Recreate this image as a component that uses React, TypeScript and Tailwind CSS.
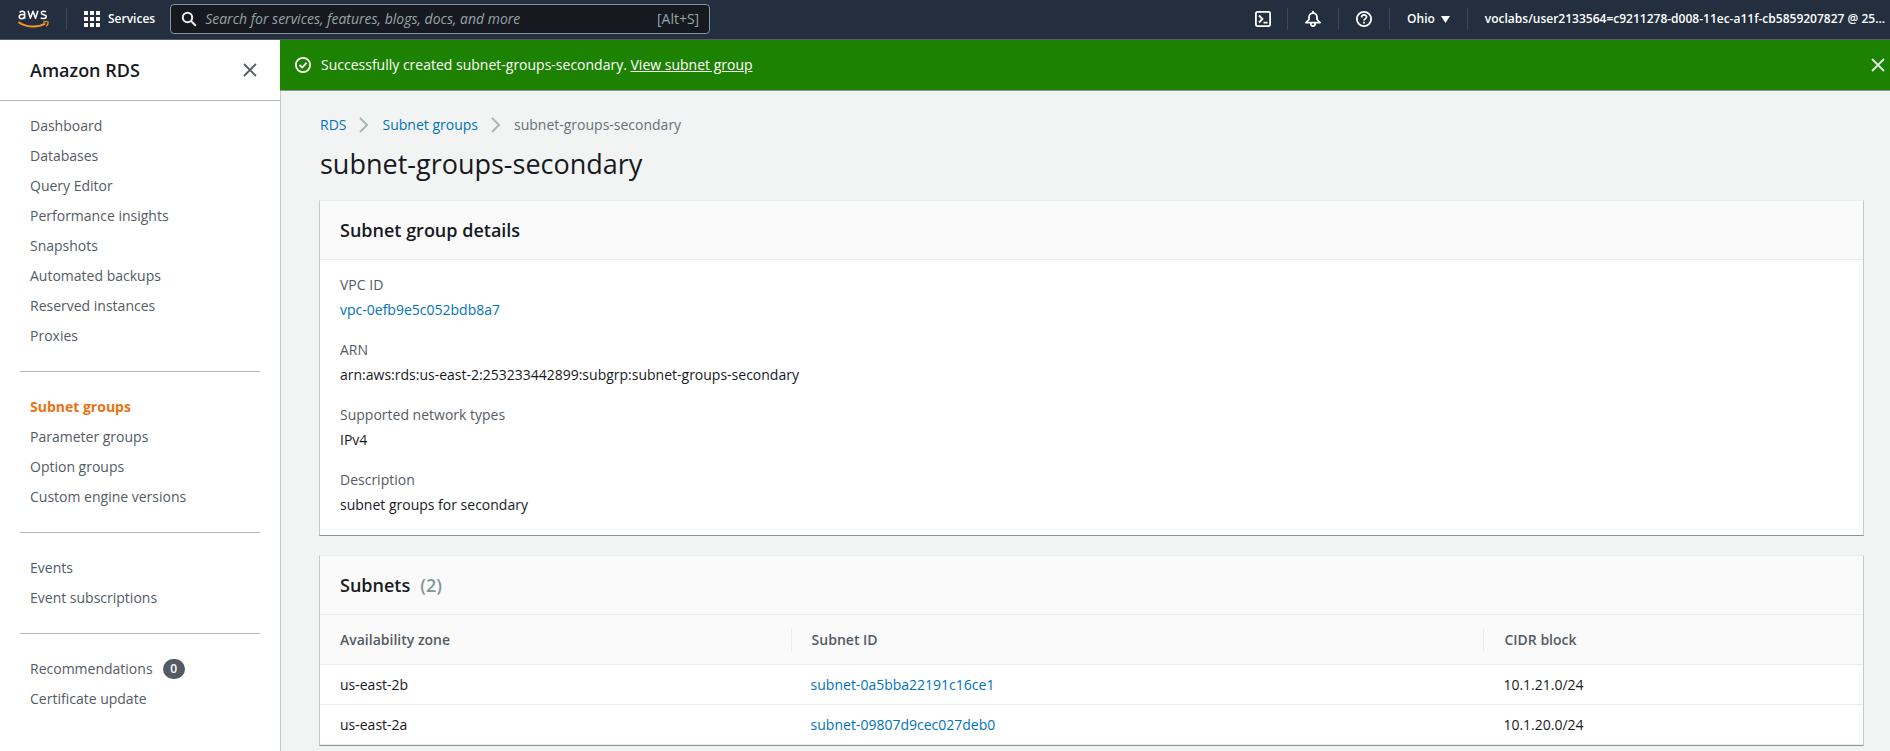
import React from "react";

type NavItem = { label: string; active?: boolean; badge?: number };

const navGroups: NavItem[][] = [
  [
    { label: "Dashboard" },
    { label: "Databases" },
    { label: "Query Editor" },
    { label: "Performance insights" },
    { label: "Snapshots" },
    { label: "Automated backups" },
    { label: "Reserved instances" },
    { label: "Proxies" },
  ],
  [
    { label: "Subnet groups", active: true },
    { label: "Parameter groups" },
    { label: "Option groups" },
    { label: "Custom engine versions" },
  ],
  [{ label: "Events" }, { label: "Event subscriptions" }],
  [{ label: "Recommendations", badge: 0 }, { label: "Certificate update" }],
];

const details = [
  { label: "VPC ID", value: "vpc-0efb9e5c052bdb8a7", link: true },
  { label: "ARN", value: "arn:aws:rds:us-east-2:253233442899:subgrp:subnet-groups-secondary" },
  { label: "Supported network types", value: "IPv4" },
  { label: "Description", value: "subnet groups for secondary" },
];

const subnets = [
  { zone: "us-east-2b", id: "subnet-0a5bba22191c16ce1", cidr: "10.1.21.0/24" },
  { zone: "us-east-2a", id: "subnet-09807d9cec027deb0", cidr: "10.1.20.0/24" },
];

function AwsLogo() {
  return (
    <svg viewBox="0 0 32 20" className="h-5 w-8" aria-hidden="true" fill="none">
      <g stroke="#fff" strokeWidth="1.500" strokeLinejoin="round">
        <path d="M2.600 3.400C3.300 2.600 4.200 2.200 5.300 2.200C7 2.200 7.700 3.100 7.700 4.700V9.800M7.700 5.900C6.900 5.500 2.200 4.900 2.200 7.800C2.200 10.300 6.300 10.200 7.600 7.800" />
        <path d="M11 1.700L13.400 9.300L16 2.200L18.500 9.300L20.900 1.700" />
        <path d="M29 2.900C27.700 1.900 24.300 1.700 24.300 4C24.300 6.300 29.300 5 29.300 7.500C29.300 10 25.100 9.900 23.700 8.700" />
      </g>
      <path d="M1.300 13C9 18.500 20.500 19 28.300 14.500" stroke="#f7981f" strokeWidth="1.900" />
      <path d="M26.300 13C28.600 12.500 30.800 12.500 31 13C31.200 13.700 30.600 15.900 29.300 17.400" stroke="#f7981f" strokeWidth="1.300" />
    </svg>
  );
}

function CloseIcon() {
  return (
    <svg viewBox="0 0 16 16" className="size-4" fill="none" stroke="currentColor" strokeWidth="1.800" aria-hidden="true">
      <path d="M2 2L14 14M14 2L2 14" />
    </svg>
  );
}

function Divider() {
  return <span className="h-[22px] w-px shrink-0 bg-[#414750]" />;
}

function TopBar() {
  return (
    <header className="flex h-10 items-center border-b border-[#545b64] bg-[#232f3e] pb-px text-xs font-semibold text-white">
      <a href="#home" aria-label="AWS home" className="flex w-[66px] shrink-0 items-center pl-[17px]">
        <AwsLogo />
      </a>
      <Divider />
      <button className="flex shrink-0 items-center gap-2 pr-[15px] pl-[17px]">
        <svg viewBox="0 0 16 16" className="size-4" fill="#fff" aria-hidden="true">
          {[0, 6, 12].map((y) => [0, 6, 12].map((x) => <rect key={`${x}-${y}`} x={x} y={y} width="4" height="4" />))}
        </svg>
        Services
      </button>
      <div className="flex h-[30px] w-[540px] shrink items-center gap-2 rounded-sm border border-[#879596] bg-[#16191f] px-[10px]">
        <svg viewBox="0 0 16 16" className="size-4 shrink-0" fill="none" stroke="#eaeded" strokeWidth="2" aria-hidden="true">
          <circle cx="6.500" cy="6.500" r="4.700" />
          <path d="M10 10L14.800 14.800" />
        </svg>
        <input
          type="search"
          aria-label="Search"
          placeholder="Search for services, features, blogs, docs, and more"
          className="min-w-0 flex-1 bg-transparent text-sm font-normal text-white italic outline-none placeholder:text-[#95a5a6]"
        />
        <span className="text-sm font-normal text-[#95a5a6]">[Alt+S]</span>
      </div>
      <div className="ml-auto flex shrink-0 items-center">
        <button aria-label="CloudShell" className="px-4">
          <svg viewBox="0 0 16 16" className="size-4" fill="none" stroke="#fff" strokeWidth="1.800" aria-hidden="true">
            <rect x="0.900" y="0.900" width="14.200" height="14.200" rx="1.500" />
            <path d="M4 4.500L7.500 8L4 11.500M8.500 11.700H12.500" />
          </svg>
        </button>
        <Divider />
        <button aria-label="Notifications" className="px-[17px]">
          <svg viewBox="0 0 16 16" className="size-4" fill="none" stroke="#fff" strokeWidth="1.800" strokeLinejoin="round" aria-hidden="true">
            <path d="M8 0V2M1 11.700L4 8.500V6.200A4 4 0 0 1 12 6.200V8.500L15 11.700ZM5.700 12C5.700 16.200 10.300 16.200 10.300 12" />
          </svg>
        </button>
        <Divider />
        <button aria-label="Support" className="px-[17px]">
          <svg viewBox="0 0 16 16" className="size-4" fill="none" stroke="#fff" strokeWidth="1.800" aria-hidden="true">
            <circle cx="8" cy="8" r="7.100" />
            <path d="M5.600 6.500C5.600 3 10.500 3.200 10.500 6C10.500 7.800 8 7.600 8 9.600M8 10.700V12.500" />
          </svg>
        </button>
        <Divider />
        <button className="flex items-center gap-[6px] px-[17px]">
          Ohio
          <svg viewBox="0 0 9 7" className="h-[7px] w-[9px]" fill="#fff" aria-hidden="true">
            <path d="M0 0H9L4.500 7Z" />
          </svg>
        </button>
        <Divider />
        <button className="pr-[5px] pl-[17px]">voclabs/user2133564=c9211278-d008-11ec-a11f-cb5859207827 @ 25...</button>
      </div>
    </header>
  );
}

function Sidebar() {
  return (
    <aside className="w-[280px] shrink-0 bg-white">
      <div className="flex h-[61px] items-center justify-between border-b border-[#b7b7b7] pr-[22px] pb-px pl-[30px]">
        <h2 className="text-lg font-semibold text-[#16191f]">Amazon RDS</h2>
        <button aria-label="Close navigation" className="text-[#545b64]">
          <CloseIcon />
        </button>
      </div>
      <nav aria-label="Amazon RDS" className="px-5 pt-[10px]">
        {navGroups.map((group, i) => (
          <ul key={i} className={i > 0 ? "mt-5 border-t border-[#b7b7b7] pt-5" : ""}>
            {group.map((item) => (
              <li key={item.label} className="flex min-h-[30px] items-center gap-[10px] pl-[10px]">
                <a href="#nav" className={item.active ? "font-bold text-[#ec7211]" : "text-[#545b64]"}>
                  {item.label}
                </a>
                {item.badge !== undefined && (
                  <span className="flex h-5 w-[22px] items-center justify-center rounded-full bg-[#545b64] text-xs font-semibold text-white">
                    {item.badge}
                  </span>
                )}
              </li>
            ))}
          </ul>
        ))}
      </nav>
    </aside>
  );
}

function Card({ title, count, children }: { title: string; count?: number; children: React.ReactNode }) {
  return (
    <section className="border border-t-[#eaeded] border-r-[#c6cacb] border-b-[#879596] border-l-[#c6cacb] bg-white">
      <h2 className="flex h-[59px] items-center gap-[10px] border-b border-[#eaeded] bg-[#fafafa] px-5 pb-px text-lg font-semibold text-[#16191f]">
        {title}
        {count !== undefined && <span className="text-[#879596]">({count})</span>}
      </h2>
      {children}
    </section>
  );
}

function Chevron() {
  return (
    <svg viewBox="0 0 10 16" className="h-4 w-[10px]" fill="none" stroke="#aab7b8" strokeWidth="2" aria-hidden="true">
      <path d="M1 1L8 8L1 15" />
    </svg>
  );
}

export default function App() {
  return (
    <div className="flex min-h-screen flex-col bg-[#f2f3f3] font-['Open_Sans','Noto_Sans',sans-serif] text-sm leading-5 text-[#16191f]">
      <TopBar />
      <div className="flex flex-1">
        <Sidebar />
        <div className="flex min-w-0 flex-1 flex-col">
          <div role="status" className="flex h-[51px] items-center border-b border-[#879596] bg-[#1d8102] pr-1 pl-[15px] text-white">
            <svg viewBox="0 0 16 16" className="mr-[10px] size-4" fill="none" stroke="#fff" strokeWidth="1.800" aria-hidden="true">
              <circle cx="8" cy="8" r="7.100" />
              <path d="M4.500 8L7.200 10.500L11.500 5.800" />
            </svg>
            <p className="flex-1 font-medium">
              Successfully created subnet-groups-secondary.{" "}
              <a href="#subnet-group" className="underline">
                View subnet group
              </a>
            </p>
            <button aria-label="Dismiss" className="text-[#e0eadc]">
              <CloseIcon />
            </button>
          </div>
          <main className="flex-1 border-l border-[#c6cacb] pt-6 pr-[26px] pb-[6px] pl-[38px]">
            <nav aria-label="Breadcrumb" className="flex items-center gap-[13px] pl-px text-[#0073bb]">
              <a href="#rds">RDS</a>
              <Chevron />
              <a href="#subnet-groups">Subnet groups</a>
              <Chevron />
              <span className="text-[#687078]">subnet-groups-secondary</span>
            </nav>
            <h1 className="mt-[11px] mb-[18px] pl-px text-[27px] leading-9">subnet-groups-secondary</h1>
            <div className="flex flex-col gap-[19px]">
              <Card title="Subnet group details">
                <dl className="flex flex-col gap-5 px-5 pt-[15px] pb-5">
                  {details.map((d) => (
                    <div key={d.label}>
                      <dt className="mb-[5px] text-[#545b64]">{d.label}</dt>
                      <dd>
                        {d.link ? (
                          <a href="#vpc" className="text-[#0073bb]">
                            {d.value}
                          </a>
                        ) : (
                          d.value
                        )}
                      </dd>
                    </div>
                  ))}
                </dl>
              </Card>
              <Card title="Subnets" count={2}>
                <table className="w-full table-fixed text-left">
                  <thead>
                    <tr className="h-[49px] border-b border-[#eaeded] bg-[#fafafa] text-[#545b64]">
                      <th className="w-[30.5%] pt-[2px] pl-5 font-semibold">Availability zone</th>
                      <th className="w-[44.9%] pt-[2px] font-semibold">
                        <div className="border-l border-[#eaeded] py-[2px] pl-5">Subnet ID</div>
                      </th>
                      <th className="pt-[2px] font-semibold">
                        <div className="border-l border-[#eaeded] py-[2px] pl-5">CIDR block</div>
                      </th>
                    </tr>
                  </thead>
                  <tbody>
                    {subnets.map((s) => (
                      <tr key={s.id} className="h-10 border-b border-[#eaeded]">
                        <td className="pt-[2px] pl-5">{s.zone}</td>
                        <td className="pt-[2px] pl-5">
                          <a href="#subnet" className="text-[#0073bb]">
                            {s.id}
                          </a>
                        </td>
                        <td className="pt-[2px] pl-5">{s.cidr}</td>
                      </tr>
                    ))}
                  </tbody>
                </table>
              </Card>
            </div>
          </main>
        </div>
      </div>
    </div>
  );
}
